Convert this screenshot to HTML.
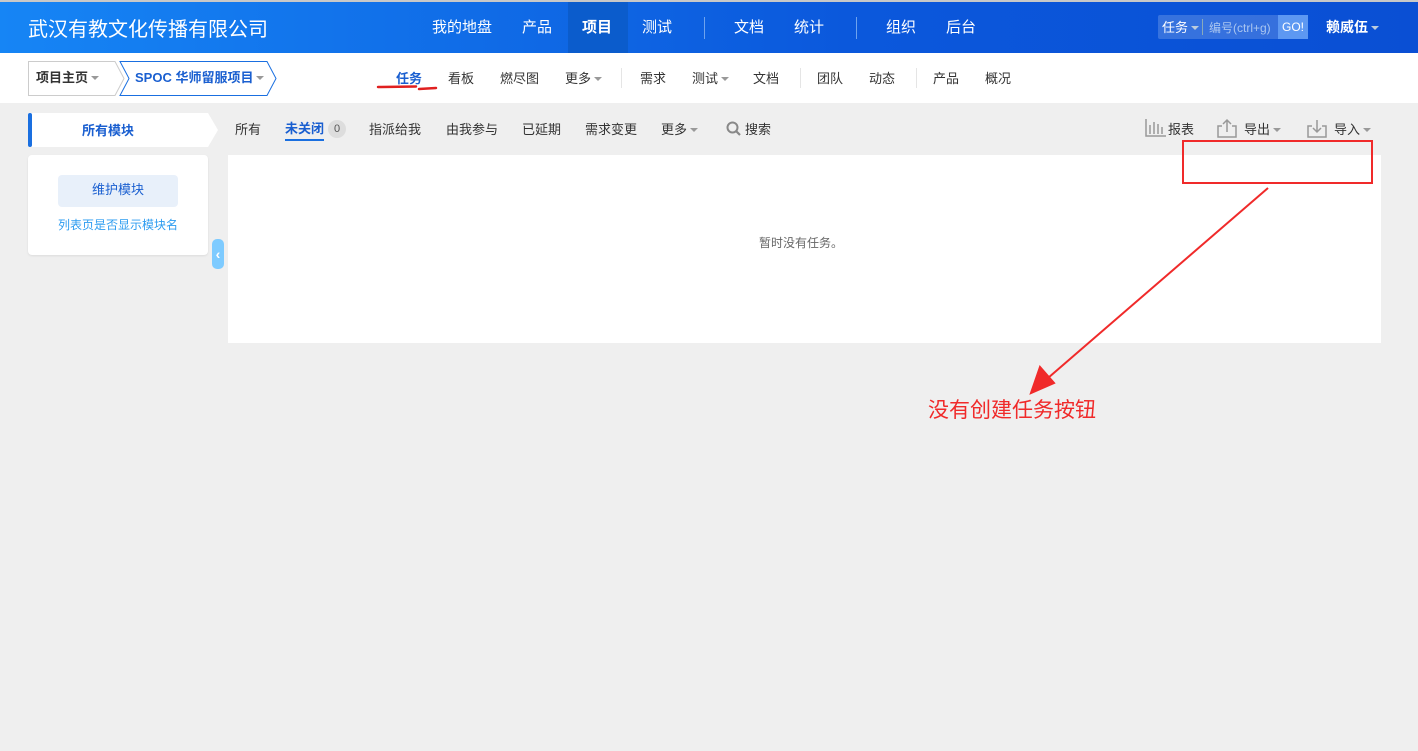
<!DOCTYPE html>
<html><head><meta charset="utf-8"><style>
*{margin:0;padding:0;box-sizing:border-box}
body{width:1418px;height:751px;background:#efefef;font-family:"Liberation Sans","Noto Sans CJK SC",sans-serif;font-size:13px;color:#333;position:relative;overflow:hidden}
.hd{position:absolute;left:0;top:0;width:1418px;height:53px;background:linear-gradient(90deg,#1685f5,#0b58dc 60%,#0a4fd4);border-top:2px solid #c8c8c8}
.logo{position:absolute;left:28px;top:11px;color:#fff;font-size:20px}
.hn{position:absolute;top:14px;color:#fff;font-size:15px}
.sep{position:absolute;top:15px;width:1px;height:22px;background:#6ea3ee}
.sub{position:absolute;left:0;top:53px;width:1418px;height:50px;background:#fff}
.t{position:absolute;font-size:13px;color:#333}
.caret{display:inline-block;border:4px solid transparent;border-top-color:#999;vertical-align:middle;margin-left:3px;margin-top:3px}
</style></head><body>
<div class="hd">
<div class="logo">武汉有教文化传播有限公司</div>
<div style="position:absolute;left:568px;top:0;width:60px;height:51px;background:#0b5ccc"></div>
<div class="hn" style="left:432px">我的地盘</div>
<div class="hn" style="left:522px">产品</div>
<div class="hn" style="left:582px;font-weight:bold">项目</div>
<div class="hn" style="left:642px">测试</div>
<div class="sep" style="left:704px"></div>
<div class="hn" style="left:734px">文档</div>
<div class="hn" style="left:794px">统计</div>
<div class="sep" style="left:856px"></div>
<div class="hn" style="left:886px">组织</div>
<div class="hn" style="left:946px">后台</div>
<div style="position:absolute;left:1158px;top:13px;width:150px;height:24px;background:rgba(255,255,255,.18);border-radius:2px"></div>
<div style="position:absolute;left:1162px;top:15px;color:#fff;font-size:13px">任务<span class="caret" style="border-top-color:#bcd"></span></div>
<div style="position:absolute;left:1202px;top:17px;width:1px;height:16px;background:#8ab"></div>
<div style="position:absolute;left:1209px;top:17px;color:#aac6f0;font-size:12px">编号(ctrl+g)</div>
<div style="position:absolute;left:1278px;top:13px;width:30px;height:24px;background:#5d98f2;color:#fff;font-size:12px;line-height:24px;text-align:center">GO!</div>
<div style="position:absolute;left:1326px;top:15px;color:#fff;font-size:14px;font-weight:bold">赖威伍<span class="caret" style="border-top-color:#bcd"></span></div>
</div>
<div class="sub">
<svg style="position:absolute;left:28px;top:8px" width="252" height="36"><path d="M0.5 0.5H87l9 17-9 17H0.5Z" fill="#fff" stroke="#ccc"/><path d="M92 0.5H239l9 17-9 17H92l9-17Z" fill="#fff" stroke="#1a6fe0"/></svg>
<div class="t" style="left:36px;top:14px;font-weight:bold">项目主页<span class="caret"></span></div>
<div class="t" style="left:135px;top:14px;color:#1a5fd0;font-weight:bold">SPOC 华师留服项目<span class="caret"></span></div>
<div class="t" style="left:396px;top:15px;color:#1a5fd0;font-weight:bold">任务</div>
<div class="t" style="left:448px;top:15px">看板</div>
<div class="t" style="left:500px;top:15px">燃尽图</div>
<div class="t" style="left:565px;top:15px">更多<span class="caret"></span></div>
<div style="position:absolute;left:621px;top:15px;width:1px;height:20px;background:#e5e5e5"></div>
<div class="t" style="left:640px;top:15px">需求</div>
<div class="t" style="left:692px;top:15px">测试<span class="caret"></span></div>
<div class="t" style="left:753px;top:15px">文档</div>
<div style="position:absolute;left:800px;top:15px;width:1px;height:20px;background:#e5e5e5"></div>
<div class="t" style="left:817px;top:15px">团队</div>
<div class="t" style="left:869px;top:15px">动态</div>
<div style="position:absolute;left:916px;top:15px;width:1px;height:20px;background:#e5e5e5"></div>
<div class="t" style="left:933px;top:15px">产品</div>
<div class="t" style="left:985px;top:15px">概况</div>
<svg style="position:absolute;left:376px;top:31px" width="64" height="8"><path d="M2 3L40 2.5 M43 5 L60 4" stroke="#e02020" stroke-width="2.5" fill="none" stroke-linecap="round"/></svg>
</div>
<svg style="position:absolute;left:28px;top:113px" width="190" height="34"><path d="M4 0H180l10 17-10 17H4a4 4 0 0 1-4-4V4a4 4 0 0 1 4-4Z" fill="#fff"/><rect x="0" y="0" width="4" height="34" rx="2" fill="#1a6fe0"/></svg>
<div class="t" style="left:82px;top:120px;color:#1a5fd0;font-weight:bold">所有模块</div>
<div class="t" style="left:235px;top:119px">所有</div>
<div class="t" style="left:285px;top:118px;color:#1a5fd0;font-weight:bold">未关闭</div>
<div style="position:absolute;left:285px;top:139px;width:39px;height:2px;background:#1a6fe0"></div>
<div style="position:absolute;left:328px;top:120px;width:18px;height:18px;border-radius:9px;background:#ddd;font-size:11px;text-align:center;line-height:18px;color:#555">0</div>
<div class="t" style="left:369px;top:119px">指派给我</div>
<div class="t" style="left:446px;top:119px">由我参与</div>
<div class="t" style="left:522px;top:119px">已延期</div>
<div class="t" style="left:585px;top:119px">需求变更</div>
<div class="t" style="left:661px;top:119px">更多<span class="caret"></span></div>
<svg style="position:absolute;left:726px;top:121px" width="16" height="16"><circle cx="6.5" cy="6.5" r="5" stroke="#888" stroke-width="2" fill="none"/><path d="M10 10l4 4" stroke="#888" stroke-width="2.2"/></svg>
<div class="t" style="left:745px;top:119px">搜索</div>
<svg style="position:absolute;left:1145px;top:119px" width="22" height="18"><path d="M1 0V17H21M5 6V15M9 3V15M13 5V15M17 8V15" stroke="#999" stroke-width="1.5" fill="none"/></svg>
<div class="t" style="left:1168px;top:119px">报表</div>
<svg style="position:absolute;left:1216px;top:118px" width="22" height="20"><path d="M6 8H2V19H20V8H16M11 14V2M7 6l4-4 4 4" stroke="#999" stroke-width="1.5" fill="none"/></svg>
<div class="t" style="left:1244px;top:119px">导出<span class="caret"></span></div>
<svg style="position:absolute;left:1306px;top:118px" width="22" height="20"><path d="M6 8H2V19H20V8H16M11 2V14M7 10l4 4 4-4" stroke="#999" stroke-width="1.5" fill="none"/></svg>
<div class="t" style="left:1334px;top:119px">导入<span class="caret"></span></div>
<div style="position:absolute;left:28px;top:155px;width:180px;height:100px;background:#fff;border-radius:4px;box-shadow:0 1px 2px rgba(0,0,0,.08)"></div>
<div style="position:absolute;left:58px;top:175px;width:120px;height:32px;background:#e8f0fa;border-radius:4px;color:#1a5fd0;font-size:13px;line-height:30px;text-align:center">维护模块</div>
<div class="t" style="left:58px;top:216px;color:#2d9cf0;font-size:12px">列表页是否显示模块名</div>
<div style="position:absolute;left:212px;top:239px;width:12px;height:30px;background:#7ecbff;border-radius:5px;color:#fff;font-size:14px;line-height:30px;text-align:center;font-weight:bold">‹</div>
<div style="position:absolute;left:228px;top:155px;width:1153px;height:188px;background:#fff"></div>
<div class="t" style="left:759px;top:234px;color:#666;font-size:12px">暂时没有任务。</div>
<div style="position:absolute;left:1182px;top:140px;width:191px;height:44px;border:2px solid #f02a2a"></div>
<svg style="position:absolute;left:0;top:0" width="1418" height="751"><path d="M1268 188L1048 378" stroke="#f02a2a" stroke-width="2"/><path d="M1031 393L1040 367 1054 383Z" fill="#f02a2a" stroke="#f02a2a" stroke-width="2"/></svg>
<div style="position:absolute;left:928px;top:394px;color:#f02a2a;font-size:21px">没有创建任务按钮</div>
</body></html>
